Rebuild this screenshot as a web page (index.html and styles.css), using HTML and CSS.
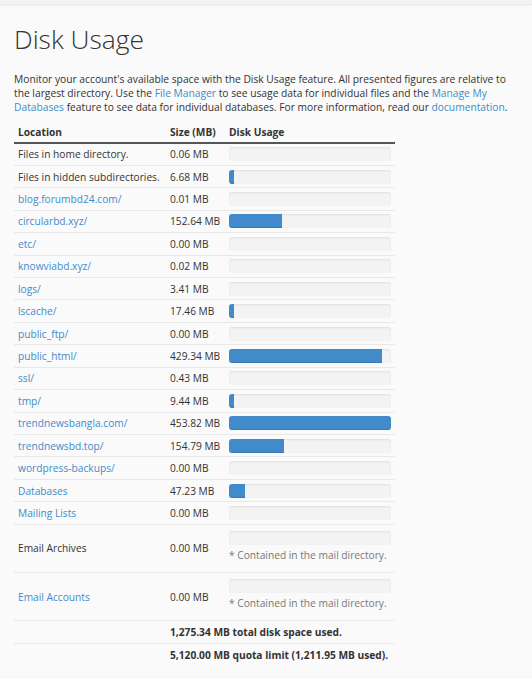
FILE: index.html
```html
<!DOCTYPE html>
<html>
<head>
<meta charset="utf-8">
<link rel="stylesheet" href="styles.css">
</head>
<body>
<div class="topbar"></div>
<div class="page">
  <h1 class="title">Disk Usage</h1>
  <p class="intro">Monitor your account's available space with the Disk Usage feature. All presented figures are relative to the largest directory. Use the <a href="#">File Manager</a> to see usage data for individual files and the <a href="#">Manage My Databases</a> feature to see data for individual databases. For more information, read our <a href="#">documentation</a>.</p>
  <table class="usage">
    <thead>
      <tr><th class="c-loc">Location</th><th class="c-size">Size (MB)</th><th class="c-bar">Disk Usage</th></tr>
    </thead>
    <tbody>
      <tr><td>Files in home directory.</td><td>0.06 MB</td><td><div class="track"></div></td></tr>
      <tr><td>Files in hidden subdirectories.</td><td>6.68 MB</td><td><div class="track"><div class="fill" style="width:5px"></div></div></td></tr>
      <tr><td><a href="#">blog.forumbd24.com/</a></td><td>0.01 MB</td><td><div class="track"></div></td></tr>
      <tr><td><a href="#">circularbd.xyz/</a></td><td>152.64 MB</td><td><div class="track"><div class="fill" style="width:33%"></div></div></td></tr>
      <tr><td><a href="#">etc/</a></td><td>0.00 MB</td><td><div class="track"></div></td></tr>
      <tr><td><a href="#">knowviabd.xyz/</a></td><td>0.02 MB</td><td><div class="track"></div></td></tr>
      <tr><td><a href="#">logs/</a></td><td>3.41 MB</td><td><div class="track"></div></td></tr>
      <tr><td><a href="#">lscache/</a></td><td>17.46 MB</td><td><div class="track"><div class="fill" style="width:5px"></div></div></td></tr>
      <tr><td><a href="#">public_ftp/</a></td><td>0.00 MB</td><td><div class="track"></div></td></tr>
      <tr><td><a href="#">public_html/</a></td><td>429.34 MB</td><td><div class="track"><div class="fill" style="width:94.5%"></div></div></td></tr>
      <tr><td><a href="#">ssl/</a></td><td>0.43 MB</td><td><div class="track"></div></td></tr>
      <tr><td><a href="#">tmp/</a></td><td>9.44 MB</td><td><div class="track"><div class="fill" style="width:5px"></div></div></td></tr>
      <tr><td><a href="#">trendnewsbangla.com/</a></td><td>453.82 MB</td><td><div class="track"><div class="fill" style="width:100%"></div></div></td></tr>
      <tr><td><a href="#">trendnewsbd.top/</a></td><td>154.79 MB</td><td><div class="track"><div class="fill" style="width:34%"></div></div></td></tr>
      <tr><td><a href="#">wordpress-backups/</a></td><td>0.00 MB</td><td><div class="track"></div></td></tr>
      <tr><td><a href="#">Databases</a></td><td>47.23 MB</td><td><div class="track"><div class="fill" style="width:10%"></div></div></td></tr>
      <tr><td><a href="#">Mailing Lists</a></td><td>0.00 MB</td><td><div class="track"></div></td></tr>
      <tr class="tall"><td>Email Archives</td><td>0.00 MB</td><td><div class="track"></div><div class="note">* Contained in the mail directory.</div></td></tr>
      <tr class="tall"><td><a href="#">Email Accounts</a></td><td>0.00 MB</td><td><div class="track"></div><div class="note">* Contained in the mail directory.</div></td></tr>
      <tr class="sum"><td></td><td colspan="2">1,275.34 MB total disk space used.</td></tr>
      <tr class="sum"><td></td><td colspan="2">5,120.00 MB quota limit (1,211.95 MB used).</td></tr>
    </tbody>
  </table>
</div>
</body>
</html>
```

FILE: styles.css
```css
html, body {
  margin: 0;
  padding: 0;
  background: #fafafa;
}
body {
  font-family: "Open Sans", "Liberation Sans", sans-serif;
  color: #333;
  font-size: 10.2px;
}
a {
  color: #428bca;
  text-decoration: none;
}
.topbar {
  height: 4px;
  background: #f3f3f3;
  border-bottom: 1px solid #ececec;
  box-shadow: 0 1px 2px rgba(0,0,0,0.04);
}
.page {
  padding: 0 14px;
}
.title {
  margin: 17px 0 0;
  font-size: 26.4px;
  line-height: 35px;
  font-weight: 300;
  color: #333;
}
.intro {
  margin: 15px 0 7px;
  line-height: 14px;
  font-size: 10.25px;
}
.usage {
  width: 381px;
  border-collapse: collapse;
  table-layout: fixed;
}
.c-loc { width: 152px; }
.c-size { width: 59px; }
.c-bar { width: 170px; }
.usage th {
  text-align: left;
  font-weight: 700;
  height: 22px;
  padding: 0 4px;
  border-bottom: 2px solid #555;
  box-sizing: border-box;
  vertical-align: middle;
}
.usage td {
  padding: 0 4px;
  height: 22.43px;
  box-sizing: border-box;
  border-top: 1px solid #e8e8e8;
  vertical-align: middle;
  white-space: nowrap;
}
.usage thead + tbody tr:first-child td {
  border-top: none;
}
.track {
  height: 14px;
  background: #f3f3f3;
  border-radius: 3px;
  box-shadow: inset 0 1px 2px rgba(0,0,0,0.08);
  overflow: hidden;
}
.fill {
  height: 100%;
  background: #428bca;
  box-shadow: inset 0 -1px 0 rgba(0,0,0,0.12);
}
.usage tr.tall td {
  height: 48.3px;
}
.note {
  color: #777;
  margin-top: 3px;
  line-height: 14px;
}
.usage tr.tall td .track {
  margin-top: -4px;
}
.usage tr.sum td {
  font-weight: 700;
  height: 22.4px;
}
```
